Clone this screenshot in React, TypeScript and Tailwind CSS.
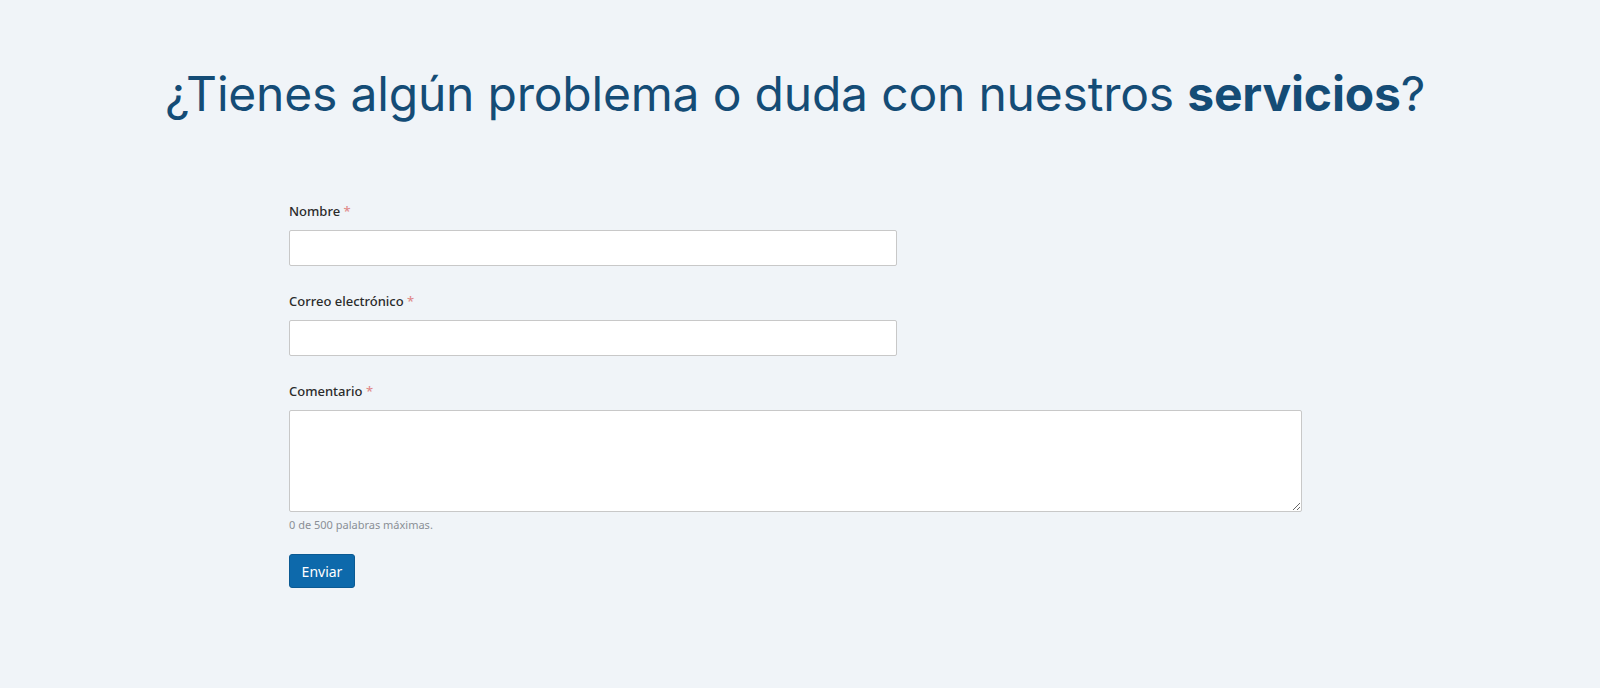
import React from "react";

function Field({ label, children }: { label: string; children: React.ReactNode }) {
  return (
    <div className="flex flex-col">
      <label className="text-[13px] leading-[20px] font-medium text-[#2b2b2b] mb-[9px]">
        {label} <span className="text-[#e08a8a]">*</span>
      </label>
      {children}
    </div>
  );
}

export default function App() {
  return (
    <div className="min-h-[688px] w-full bg-[#f0f4f8] font-['Noto_Sans',sans-serif]">
      <div className="pt-[64px] pb-[77px] pr-[10px]">
        <h1 className="text-center font-['Inter',sans-serif] text-[48px] leading-[60px] text-[#144c76] tracking-[-0.2px]">
          ¿Tienes algún problema o duda con nuestros <span className="font-bold">servicios</span>?
        </h1>
      </div>
      <form className="pl-[289px] w-[1302px] flex flex-col">
        <Field label="Nombre">
          <input className="w-[608px] h-[36px] bg-white border border-[#c8c8c8] rounded-[2px]" />
        </Field>
        <div className="h-[25px]" />
        <Field label="Correo electrónico">
          <input className="w-[608px] h-[36px] bg-white border border-[#c8c8c8] rounded-[2px]" />
        </Field>
        <div className="h-[25px]" />
        <Field label="Comentario">
          <textarea className="w-[1013px] h-[102px] bg-white border border-[#c8c8c8] rounded-[2px] block" />
        </Field>
        <p className="text-[11px] leading-[18px] text-[#8a8f96] mt-[4px]">0 de 500 palabras máximas.</p>
        <div className="mt-[20px]">
          <button
            type="button"
            className="w-[66px] h-[34px] bg-[#0d69ab] text-white text-[14px] font-normal rounded-[3px] border border-[#0b5a93]"
          >
            Enviar
          </button>
        </div>
      </form>
    </div>
  );
}
